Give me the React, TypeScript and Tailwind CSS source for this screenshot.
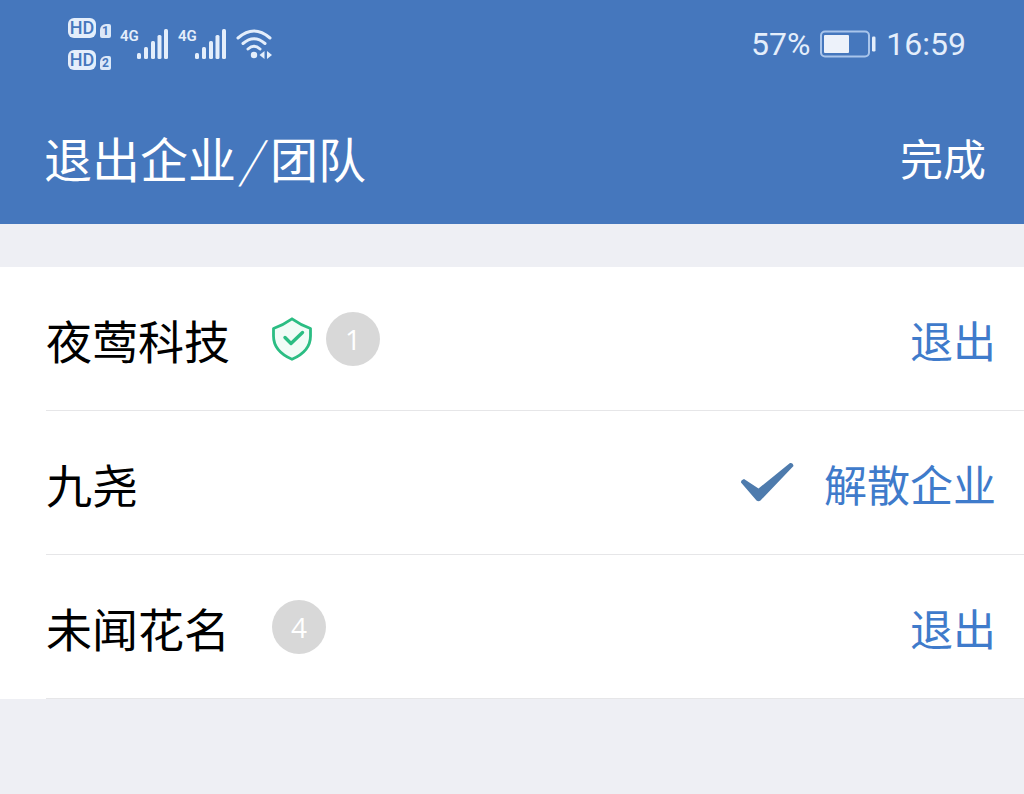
import React from "react";

const cjk = "font-['Noto_Sans_CJK_SC',sans-serif]";

function HdBadge({ sim }: { sim: number }) {
  return (
    <div className="flex items-end gap-1">
      <span className="flex h-5 w-7 items-center justify-center rounded-md bg-[#e4eefb] font-['Roboto',sans-serif] text-[18px] leading-5 font-medium text-[#4577bd]">
        HD
      </span>
      <span className="flex h-[14px] w-[11px] items-center justify-center rounded-xs rounded-tl-md bg-[#dce8f8] font-['Roboto',sans-serif] text-[12px] leading-[14px] font-bold text-[#4577bd]">
        {sim}
      </span>
    </div>
  );
}

function Signal() {
  return (
    <div className="flex h-8 items-start">
      <span className="w-4 font-['Roboto',sans-serif] text-[15px] leading-4 font-semibold text-[#e4eefb]">
        4G
      </span>
      <svg width="33" height="32" viewBox="0 0 33 32" fill="#e4eefb" aria-hidden="true">
        <rect x="1" y="25" width="4" height="6" rx="1.5" />
        <rect x="8" y="19" width="4" height="12" rx="1.5" />
        <rect x="15" y="13" width="4" height="18" rx="1.5" />
        <rect x="21.5" y="7" width="4" height="24" rx="1.5" />
        <rect x="28" y="1" width="4" height="30" rx="1.5" />
      </svg>
    </div>
  );
}

function Wifi() {
  return (
    <svg width="37" height="32" viewBox="0 0 37 32" fill="none" stroke="#e4eefb" strokeWidth="3" strokeLinecap="round" aria-hidden="true">
      <path d="M2 10Q18 -4 34 10" />
      <path d="M7 15.5Q18 6 29 15.5" />
      <path d="M12 21Q18 15.5 24 21" />
      <circle cx="18" cy="27" r="3.2" fill="#e4eefb" stroke="none" />
      <path d="M28.5 23v8l-5-4zM31 23v8l5-4z" fill="#e4eefb" stroke="none" />
    </svg>
  );
}

function Battery() {
  return (
    <svg width="56" height="28" viewBox="0 0 56 28" aria-hidden="true">
      <rect x="1" y="1.5" width="48" height="25" rx="4" fill="none" stroke="#a9c5eb" strokeWidth="2" />
      <rect x="4" y="5" width="25" height="18" rx="1" fill="#edf2fa" />
      <rect x="52" y="6.5" width="3.5" height="15" rx="1.2" fill="#e4eefb" />
    </svg>
  );
}

function Shield() {
  return (
    <svg width="40" height="44" viewBox="0 0 40 44" fill="#f1fcf7" stroke="#2bbd83" strokeWidth="2.8" strokeLinejoin="round" role="img" aria-label="已认证">
      <path d="M20 1.8Q11.500 7.800 1.5 11.500V19C1.5 30 9 37.500 20 42.300C31 37.500 38.5 30 38.5 19V11.500Q28.500 7.800 20 1.8Z" />
      <path d="M13 20.5l6 6 11.500-11" fill="none" strokeWidth="3.4" strokeLinecap="round" />
    </svg>
  );
}

function Check() {
  return (
    <svg width="54" height="40" viewBox="0 0 54 40" fill="#4e7bad" role="img" aria-label="已选择">
      <path d="M1 20.500Q0.500 18 4 17L18.500 26.500L50 1Q53 0.500 53.500 4L20.500 38.500Q18.500 40 16.500 38.500Z" />
    </svg>
  );
}

type Team = {
  name: string;
  action: string;
  count?: number;
  verified?: boolean;
  selected?: boolean;
};

const teams: Team[] = [
  { name: "夜莺科技", action: "退出", count: 1, verified: true },
  { name: "九尧", action: "解散企业", selected: true },
  { name: "未闻花名", action: "退出", count: 4 },
];

function TeamRow({ team }: { team: Team }) {
  return (
    <li className="ml-[46px] flex h-36 items-center justify-between border-b border-[#e6e6e8] pr-7">
      <div className="flex items-center">
        <span className="text-[46px] leading-[60px] text-black">{team.name}</span>
        <div className="ml-[42px] flex items-center gap-[14px]">
          {team.verified && <Shield />}
          {team.count !== undefined && (
            <span className="flex size-[54px] items-center justify-center rounded-full bg-[#d8d8d8] font-['Open_Sans',sans-serif] text-[28px] leading-8 text-white">
              {team.count}
            </span>
          )}
        </div>
      </div>
      <div className="flex items-center gap-[30px]">
        {team.selected && (
          <span className="pb-[2px]">
            <Check />
          </span>
        )}
        <button type="button" className="text-[43px] leading-[60px] text-[#3f7bcb]">
          {team.action}
        </button>
      </div>
    </li>
  );
}

export default function App() {
  return (
    <div className={`min-h-screen bg-[#eeeff4] ${cjk}`}>
      <header className="bg-[#4577bd] text-white">
        <div className="flex h-[88px] items-center justify-between pr-[58px] pl-[68px]">
          <div className="flex items-center gap-[9px]">
            <div className="flex flex-col gap-3">
              <HdBadge sim={1} />
              <HdBadge sim={2} />
            </div>
            <Signal />
            <Signal />
            <Wifi />
          </div>
          <div className="flex items-center gap-[10px] font-['Roboto',sans-serif] text-[32px] leading-10 text-[#e4eefb]">
            <span>57%</span>
            <Battery />
            <time>16:59</time>
          </div>
        </div>
        <div className="flex h-[136px] items-center justify-between pt-[2px] pr-[38px] pl-[44px]">
          <h1 className="text-[48px] leading-[64px] font-normal">
            退出企业<span className="pr-[11px] pl-1 font-light italic">/</span>团队
          </h1>
          <button type="button" className="text-[43px] leading-[60px]">
            完成
          </button>
        </div>
      </header>
      <main className="pt-[43px]">
        <ul className="bg-white">
          {teams.map((team) => (
            <TeamRow key={team.name} team={team} />
          ))}
        </ul>
      </main>
    </div>
  );
}
